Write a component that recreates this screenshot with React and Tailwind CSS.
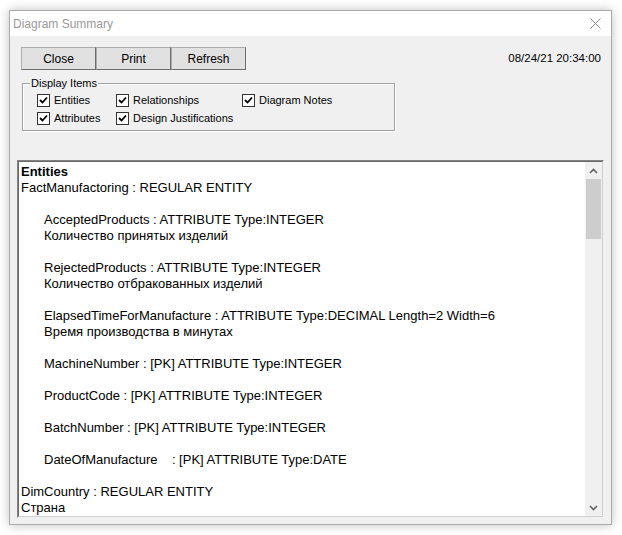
import React from "react";

const lines = [
  { text: "Entities", bold: true },
  { text: "FactManufactoring : REGULAR ENTITY" },
  { text: "" },
  { text: "AcceptedProducts : ATTRIBUTE Type:INTEGER", indent: true },
  { text: "Количество принятых изделий", indent: true },
  { text: "" },
  { text: "RejectedProducts : ATTRIBUTE Type:INTEGER", indent: true },
  { text: "Количество отбракованных изделий", indent: true },
  { text: "" },
  {
    text: "ElapsedTimeForManufacture : ATTRIBUTE Type:DECIMAL Length=2 Width=6",
    indent: true,
  },
  { text: "Время производства в минутах", indent: true },
  { text: "" },
  { text: "MachineNumber : [PK] ATTRIBUTE Type:INTEGER", indent: true },
  { text: "" },
  { text: "ProductCode : [PK] ATTRIBUTE Type:INTEGER", indent: true },
  { text: "" },
  { text: "BatchNumber : [PK] ATTRIBUTE Type:INTEGER", indent: true },
  { text: "" },
  { text: "DateOfManufacture    : [PK] ATTRIBUTE Type:DATE", indent: true },
  { text: "" },
  { text: "DimCountry : REGULAR ENTITY" },
  { text: "Страна" },
];

const Checkbox = ({ label }) => (
  <label className="flex h-[13px] items-center gap-[4px] leading-[13px]">
    <span className="flex h-[13px] w-[13px] items-center justify-center border border-[#333] bg-white">
      <svg width="9" height="9" viewBox="0 0 9 9">
        <path d="M1 4 L3.5 6.5 L8 1.5" fill="none" stroke="#000" strokeWidth="1.8" />
      </svg>
    </span>
    <span>{label}</span>
  </label>
);

const WinButton = ({ children }) => (
  <button className="h-[23px] w-[75px] border border-[#adadad] border-r-[#6d6d6d] border-b-[#6d6d6d] bg-[#e1e1e1] text-[12px] text-black">
    {children}
  </button>
);

const Chevron = ({ up }) => (
  <svg width="9" height="6" viewBox="0 0 9 6">
    <path
      d={up ? "M1 5 L4.5 1.5 L8 5" : "M1 1 L4.5 4.5 L8 1"}
      fill="none"
      stroke="#606060"
      strokeWidth="1.6"
    />
  </svg>
);

export default function App() {
  return (
    <div
      className="h-[535px] w-[622px] bg-white pl-[9px] pt-[10px]"
      style={{ fontFamily: '"Liberation Sans", Arial, sans-serif' }}
    >
      <div className="flex h-[515px] w-[603px] flex-col border border-[#aaaaaa] bg-[#f0f0f0] shadow-[0_0_10px_rgba(0,0,0,0.25)]">
        {/* title bar */}
        <div className="flex h-[25px] items-center justify-between bg-white pl-[3px] pr-[10px]">
          <span className="text-[12px] text-[#999999]">Diagram Summary</span>
          <svg width="11" height="11" viewBox="0 0 11 11">
            <path d="M0.5 0.5 L10.5 10.5 M10.5 0.5 L0.5 10.5" stroke="#8a8a8a" strokeWidth="1" />
          </svg>
        </div>

        <div className="flex flex-1 flex-col px-[7px] pt-[11px]">
          {/* buttons row */}
          <div className="flex items-center justify-between pl-[4px] pr-[3px]">
            <div className="flex">
              <WinButton>Close</WinButton>
              <WinButton>Print</WinButton>
              <WinButton>Refresh</WinButton>
            </div>
            <span className="text-[11.5px] text-black">08/24/21 20:34:00</span>
          </div>

          {/* display items group */}
          <div className="relative ml-[5px] mt-[13px] h-[48px] w-[373px] border border-[#a0a0a0] shadow-[1px_1px_0_#ffffff,inset_1px_1px_0_#ffffff] text-[11px] text-black">
            <span className="absolute -top-[8px] left-[7px] bg-[#f0f0f0] px-[1px] leading-[14px]">
              Display Items
            </span>
            <div className="grid grid-cols-[79px_126px_auto] gap-y-[5px] pl-[14px] pt-[10px]">
              <Checkbox label="Entities" />
              <Checkbox label="Relationships" />
              <Checkbox label="Diagram Notes" />
              <Checkbox label="Attributes" />
              <Checkbox label="Design Justifications" />
            </div>
          </div>

          {/* text area */}
          <div className="mt-[29px] flex h-[358px] w-[587px] border border-[#828282] border-b-[#f0f0f0] border-r-[#f0f0f0]">
            <div className="flex flex-1 border border-[#696969] border-b-[#d0d0d0] border-r-[#d0d0d0] bg-white">
              <div className="flex-1 overflow-hidden pl-[2px] pt-[2px] text-[13px] leading-[16px] text-black">
                {lines.map((l, i) => (
                  <div
                    key={i}
                    className={`h-[16px] whitespace-pre ${l.bold ? "font-bold" : ""} ${l.indent ? "pl-[23px]" : ""}`}
                  >
                    {l.text}
                  </div>
                ))}
              </div>
              <div className="flex w-[17px] flex-col bg-[#f0f0f0]">
                <div className="flex h-[17px] items-center justify-center">
                  <Chevron up />
                </div>
                <div className="mx-[1px] h-[60px] bg-[#cdcdcd]" />
                <div className="flex-1" />
                <div className="flex h-[17px] items-center justify-center">
                  <Chevron />
                </div>
              </div>
            </div>
          </div>
        </div>
      </div>
    </div>
  );
}
